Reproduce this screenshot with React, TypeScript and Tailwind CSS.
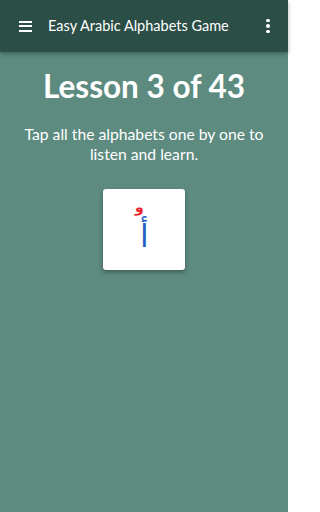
export default function App() {
  return (
    <div
      className="w-[288px] h-[512px] bg-[#5d8b80] flex flex-col"
      style={{ fontFamily: "Lato, 'Open Sans', sans-serif" }}
    >
      {/* Toolbar */}
      <div className="h-[52px] bg-[#2b4e46] flex items-center shadow-[0_2px_4px_rgba(0,0,0,0.3)] relative z-10">
        <div className="w-[48px] flex justify-center pl-[2px]">
          <div className="w-[13px] flex flex-col gap-[2.5px]">
            <div className="h-[2px] bg-white" />
            <div className="h-[2px] bg-white" />
            <div className="h-[2px] bg-white" />
          </div>
        </div>
        <span className="text-white text-[14.5px] flex-1">Easy Arabic Alphabets Game</span>
        <div className="w-[40px] flex flex-col items-center gap-[2px]">
          <div className="w-[3.5px] h-[3.5px] bg-white rounded-full" />
          <div className="w-[3.5px] h-[3.5px] bg-white rounded-full" />
          <div className="w-[3.5px] h-[3.5px] bg-white rounded-full" />
        </div>
      </div>

      {/* Content */}
      <div className="flex flex-col items-center text-white">
        <h1 className="text-[31.5px] font-bold mt-[15px] leading-[38px]">Lesson 3 of 43</h1>
        <p className="text-[15.7px] text-center leading-[20px] mt-[19px] px-4">
          Tap all the alphabets one by one to
          <br />
          listen and learn.
        </p>
        <div className="mt-[25px] w-[82px] h-[81px] bg-white rounded-[3px] shadow-[0_2px_4px_rgba(0,0,0,0.35)] relative">
          <span
            className="absolute left-[37px] top-[32px] text-[#1e5fc2] text-[31px] leading-none"
            style={{ fontFamily: "'DejaVu Sans', sans-serif" }}
          >
            أ
          </span>
          <span
            className="absolute left-[32px] top-[11px] text-[#e8232a] text-[14px] leading-none font-bold"
            style={{ fontFamily: "'DejaVu Sans', sans-serif" }}
          >
            و
          </span>
        </div>
      </div>
    </div>
  );
}
